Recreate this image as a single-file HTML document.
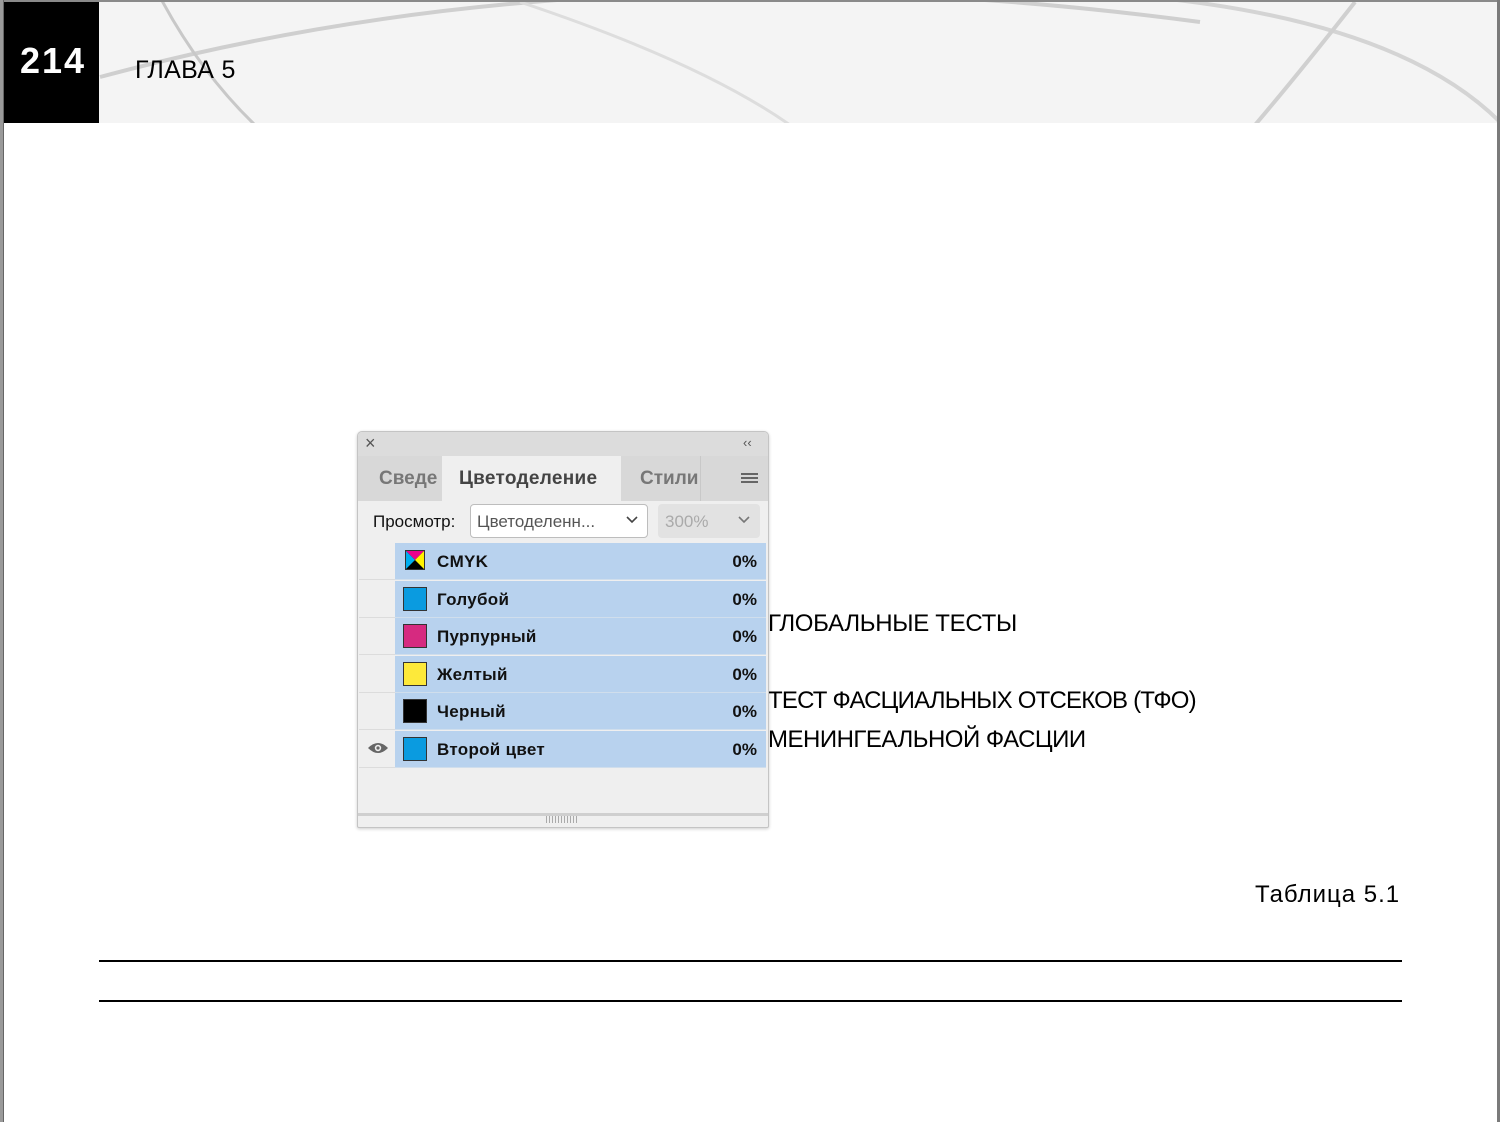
<!DOCTYPE html>
<html><head><meta charset="utf-8"><style>
*{margin:0;padding:0;box-sizing:border-box}
body{width:1500px;height:1122px;background:#fff;position:relative;overflow:hidden;font-family:"Liberation Sans","DejaVu Sans",sans-serif}
.abs{position:absolute}
.hdr{left:0;top:0;width:1500px;height:123px;background:#f4f4f4;border-top:2px solid #8a8a8a;overflow:hidden}
.t{position:absolute;white-space:nowrap;color:#000}
.row{position:absolute;left:395px;width:371px;height:37px;background:#b8d2ee;border-bottom:1px solid #d0deec}
.gut{position:absolute;left:359px;width:36px;height:37px;background:#efefef;border-bottom:1px solid #dcdcdc}
.sw{position:absolute;left:8px;top:6px;width:24px;height:24px;border:1px solid #333}
.nm{position:absolute;left:42px;top:9px;font-weight:bold;font-size:17px;color:#111;letter-spacing:0.3px}
.pc{position:absolute;right:9px;top:9px;font-weight:bold;font-size:17px;color:#111}
</style></head><body>
<div class="abs hdr">
<svg width="1500" height="123" class="abs" style="left:0;top:0">
<path d="M100 75 Q600 -60 1200 20" stroke="#cfcfcf" stroke-width="4" fill="none"/>
<path d="M1150 -5 Q1400 20 1500 120" stroke="#d4d4d4" stroke-width="4" fill="none"/>
<path d="M160 -5 Q200 70 255 123" stroke="#c8c8c8" stroke-width="3" fill="none"/>
<path d="M1355 0 Q1300 70 1255 123" stroke="#d0d0d0" stroke-width="4" fill="none"/>
<path d="M520 0 Q700 60 790 123" stroke="#dddddd" stroke-width="3" fill="none"/>
</svg>
</div>
<div class="abs" style="left:0;top:0;width:4px;height:1122px;background:#9a9a9a"></div>
<div class="abs" style="left:3px;top:0;width:1px;height:1122px;background:#666"></div>
<div class="abs" style="left:1497px;top:0;width:3px;height:1122px;background:#7a7a7a"></div>
<div class="abs" style="left:4px;top:2px;width:95px;height:121px;background:#000"></div>
<div class="t" style="left:20px;top:40px;color:#fff;font-size:36px;font-weight:bold;letter-spacing:2px">214</div>
<div class="t" style="left:135px;top:56px;font-size:25px;letter-spacing:0.3px">ГЛАВА 5</div>

<div class="t" style="left:768px;top:610px;font-size:24px;letter-spacing:-0.3px">ГЛОБАЛЬНЫЕ ТЕСТЫ</div>
<div class="t" style="left:768px;top:687px;font-size:24px;letter-spacing:-0.8px">ТЕСТ ФАСЦИАЛЬНЫХ ОТСЕКОВ (ТФО)</div>
<div class="t" style="left:768px;top:726px;font-size:24px;letter-spacing:-0.5px">МЕНИНГЕАЛЬНОЙ ФАСЦИИ</div>
<div class="t" style="left:1255px;top:881px;font-size:24px;letter-spacing:1px">Таблица 5.1</div>
<div class="abs" style="left:99px;top:960px;width:1303px;height:2px;background:#000"></div>
<div class="abs" style="left:99px;top:1000px;width:1303px;height:2px;background:#000"></div>

<!-- panel -->
<div class="abs" style="left:357px;top:431px;width:412px;height:397px;background:#efefef;border:1px solid #c4c4c4;border-radius:5px 5px 2px 2px;box-shadow:0 1px 3px rgba(0,0,0,.2);overflow:hidden">
 <div class="abs" style="left:0;top:0;width:412px;height:24px;background:#dcdcdc"></div>
 <div class="t" style="left:7px;top:1px;font-size:18px;color:#555">×</div>
 <div class="t" style="left:385px;top:3px;font-size:13px;color:#555">‹‹</div>
 <div class="abs" style="left:0;top:24px;width:412px;height:45px;background:#d8d8d8"></div>
 <div class="abs" style="left:84px;top:24px;width:179px;height:45px;background:#efefef"></div>
 <div class="abs" style="left:342px;top:24px;width:1px;height:45px;background:#c8c8c8"></div>
 <div class="t" style="left:21px;top:36px;font-size:19px;font-weight:bold;color:#777">Сведе</div>
 <div class="t" style="left:101px;top:36px;font-size:19px;font-weight:bold;color:#444;letter-spacing:0.3px">Цветоделение</div>
 <div class="t" style="left:282px;top:36px;font-size:19px;font-weight:bold;color:#777">Стили</div>
 <div class="abs" style="left:383px;top:41px;width:17px;height:10px;border-top:2px solid #666;border-bottom:2px solid #666"></div>
 <div class="abs" style="left:383px;top:45px;width:17px;height:2px;background:#666"></div>
 <div class="t" style="left:15px;top:80px;font-size:17px;color:#111">Просмотр:</div>
 <div class="abs" style="left:112px;top:72px;width:178px;height:34px;background:#fff;border:1px solid #bdbdbd;border-radius:4px"></div>
 <div class="t" style="left:119px;top:80px;font-size:17px;color:#555">Цветоделенн...</div>
 <svg class="abs" style="left:268px;top:84px" width="12" height="8"><path d="M1 1 L6 6 L11 1" stroke="#444" stroke-width="1.6" fill="none"/></svg>
 <div class="abs" style="left:300px;top:72px;width:102px;height:34px;background:#e2e2e2;border-radius:4px"></div>
 <div class="t" style="left:307px;top:80px;font-size:17px;color:#aaa">300%</div>
 <svg class="abs" style="left:380px;top:84px" width="12" height="8"><path d="M1 1 L6 6 L11 1" stroke="#777" stroke-width="1.6" fill="none"/></svg>
 <div class="abs" style="left:0;top:381px;width:412px;height:3px;background:#cfcfcf"></div>
 <div class="abs" style="left:188px;top:384px;width:32px;height:7px;background:repeating-linear-gradient(90deg,#aaa 0 1px,transparent 1px 3px)"></div>
</div>

<div class="gut" style="top:543px"></div><div class="row" style="top:543px">
 <svg class="sw" style="left:10px;top:7px;width:20px;height:20px;border:1px solid #333" viewBox="0 0 20 20"><rect width="20" height="20" fill="#000"/><path d="M0 0H20L10 10Z" fill="#ec008c"/><path d="M0 0V20L10 10Z" fill="#00aeef"/><path d="M20 0V20L10 10Z" fill="#fff200"/></svg>
 <div class="nm">CMYK</div><div class="pc">0%</div></div>
<div class="gut" style="top:581px"></div><div class="row" style="top:581px"><div class="sw" style="background:#0a9be0"></div><div class="nm">Голубой</div><div class="pc">0%</div></div>
<div class="gut" style="top:618px"></div><div class="row" style="top:618px"><div class="sw" style="background:#d62a80"></div><div class="nm">Пурпурный</div><div class="pc">0%</div></div>
<div class="gut" style="top:656px"></div><div class="row" style="top:656px"><div class="sw" style="background:#fde93a"></div><div class="nm">Желтый</div><div class="pc">0%</div></div>
<div class="gut" style="top:693px"></div><div class="row" style="top:693px"><div class="sw" style="background:#000"></div><div class="nm">Черный</div><div class="pc">0%</div></div>
<div class="gut" style="top:731px"></div><div class="row" style="top:731px"><div class="sw" style="background:#0a9be0"></div><div class="nm">Второй цвет</div><div class="pc">0%</div></div>
<svg class="abs" style="left:367px;top:741px" width="22" height="14" viewBox="0 0 22 14"><path d="M1 7 Q11 -3 21 7 Q11 17 1 7Z" fill="#666"/><circle cx="11" cy="7" r="3.2" fill="#efefef"/><circle cx="11" cy="7" r="1.6" fill="#666"/></svg>
</body></html>
